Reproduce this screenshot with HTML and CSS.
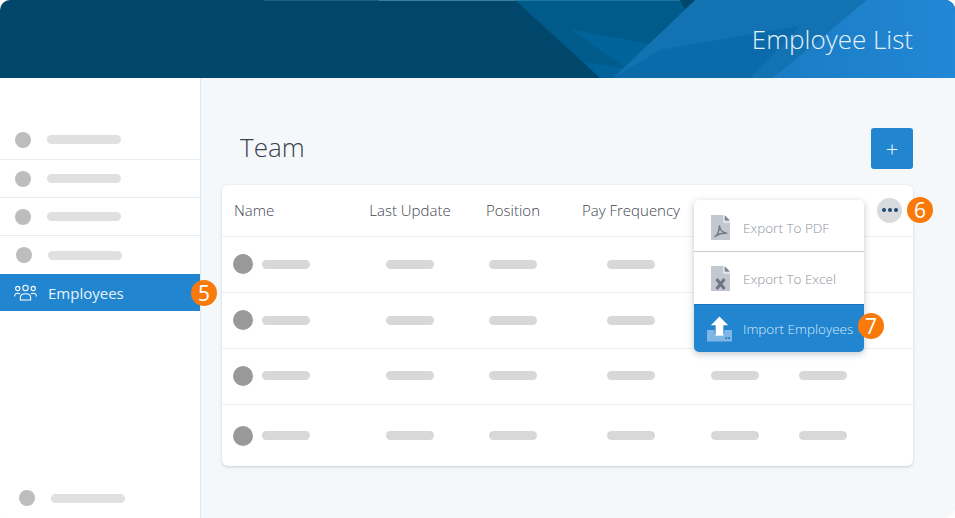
FILE: index.html
```html
<!DOCTYPE html>
<html lang="en">
<head>
<meta charset="utf-8">
<title>Employee List</title>
<link rel="stylesheet" href="styles.css">
</head>
<body>
<div class="app">
  <header class="banner">
    <svg class="banner-art" viewBox="0 0 955 78" preserveAspectRatio="none" aria-hidden="true">
      <defs>
        <linearGradient id="bright" x1="0" y1="0" x2="1" y2="0">
          <stop offset="0" stop-color="#1a7cc3"/>
          <stop offset="1" stop-color="#2287d6"/>
        </linearGradient>
      </defs>
      <polygon points="515,0 695,0 613,78 600,78" fill="#005a8a"/>
      <polygon points="570,29 650,44 625,68" fill="#00639a"/>
      <polygon points="600,78 584,62 625,68 613,78" fill="#00639a"/>
      <polygon points="695,0 955,0 955,78 613,78" fill="#1372b2"/>
      <polygon points="613,78 660,50 800,26 750,78" fill="#0b6aa9"/>
      <polygon points="773,78 867,0 955,0 955,78" fill="url(#bright)"/>
      <polygon points="680,0 695,0 685,9" fill="#00476b"/>
      <rect x="264" y="0" width="115" height="1" fill="#1f6283"/>
      <rect x="379" y="0" width="136" height="1" fill="#3f7d9e"/>
      <rect x="515" y="0" width="165" height="1" fill="#1b789f"/>
    </svg>
    <h1 class="banner-title">Employee List</h1>
  </header>
  <div class="body">
    <nav class="sidebar">
      <div class="nav-item"><span class="dot"></span><span class="nav-bar"></span></div>
      <div class="nav-item"><span class="dot"></span><span class="nav-bar"></span></div>
      <div class="nav-item"><span class="dot"></span><span class="nav-bar"></span></div>
      <div class="nav-item nav-item-shift"><span class="dot"></span><span class="nav-bar"></span></div>
      <div class="nav-active">
        <svg class="people" viewBox="0 0 24 18" aria-hidden="true">
          <g fill="none" stroke="#fff" stroke-width="1.1">
            <circle cx="12" cy="3.8" r="2.8"/>
            <circle cx="3.9" cy="4.3" r="2.2"/>
            <circle cx="20.1" cy="4.3" r="2.2"/>
            <path d="M6.6 16.4v-2.6c0-2.4 2-4.1 5.4-4.1s5.4 1.700 5.400 4.100v2.600z"/>
            <path d="M.6 12.600c0-2.300 1.300-3.400 3.400-3.400 1 0 1.800.3 2.400.8"/>
            <path d="M23.400 12.600c0-2.300-1.300-3.400-3.400-3.400-1 0-1.800.3-2.400.8"/>
          </g>
        </svg>
        <span class="nav-label">Employees</span>
        <span class="badge badge-5">5</span>
      </div>
      <div class="nav-item nav-foot"><span class="dot"></span><span class="nav-bar"></span></div>
    </nav>
    <main class="content">
      <div class="title-row">
        <h2 class="page-title">Team</h2>
        <button class="add-btn" type="button">+</button>
      </div>
      <section class="card">
        <div class="row row-head">
          <span class="cell cell-name">Name</span>
          <span class="cell">Last Update</span>
          <span class="cell">Position</span>
          <span class="cell">Pay Frequency</span>
          <span class="cell"></span>
          <span class="cell"></span>
          <span class="cell"><span class="more"><i></i><i></i><i></i></span></span>
        </div>
        <div class="row">
          <span class="cell cell-name"><span class="avatar"></span><span class="bar"></span></span>
          <span class="cell"><span class="bar"></span></span>
          <span class="cell"><span class="bar"></span></span>
          <span class="cell"><span class="bar"></span></span>
        </div>
        <div class="row">
          <span class="cell cell-name"><span class="avatar"></span><span class="bar"></span></span>
          <span class="cell"><span class="bar"></span></span>
          <span class="cell"><span class="bar"></span></span>
          <span class="cell"><span class="bar"></span></span>
        </div>
        <div class="row row-third">
          <span class="cell cell-name"><span class="avatar"></span><span class="bar"></span></span>
          <span class="cell"><span class="bar"></span></span>
          <span class="cell"><span class="bar"></span></span>
          <span class="cell"><span class="bar"></span></span>
          <span class="cell"><span class="bar"></span></span>
          <span class="cell"><span class="bar"></span></span>
        </div>
        <div class="row row-last">
          <span class="cell cell-name"><span class="avatar"></span><span class="bar"></span></span>
          <span class="cell"><span class="bar"></span></span>
          <span class="cell"><span class="bar"></span></span>
          <span class="cell"><span class="bar"></span></span>
          <span class="cell"><span class="bar"></span></span>
          <span class="cell"><span class="bar"></span></span>
        </div>
        <span class="badge badge-6">6</span>
        <div class="menu">
          <div class="menu-item menu-pdf">
            <svg class="file-icon" viewBox="0 0 19 25" aria-hidden="true">
              <path d="M0 0h12.500l6.500 6.500v18.500h-19z" fill="#c3c8d0"/>
              <path d="M13.500 0l5.500 5.500h-5.500z" fill="#7c8490"/>
              <path d="M13 0v7h6" fill="none" stroke="#fff" stroke-width="1"/>
              <path d="M4 21.500c2.500-1.500 4-5 4.500-10.500.4 3.500 2.500 6.500 7 7.300-3.500-.2-8 .4-11.500 3.200z" fill="none" stroke="#717986" stroke-width="1.500" stroke-linejoin="round"/>
            </svg>
            <span>Export To PDF</span>
          </div>
          <div class="menu-item menu-excel">
            <svg class="file-icon" viewBox="0 0 19 25" aria-hidden="true">
              <path d="M0 0h12.500l6.500 6.500v18.500h-19z" fill="#c3c8d0"/>
              <path d="M13.500 0l5.500 5.500h-5.500z" fill="#7c8490"/>
              <path d="M13 0v7h6" fill="none" stroke="#fff" stroke-width="1"/>
              <path d="M5.500 13l8 10M13.500 13l-8 10" fill="none" stroke="#6f7784" stroke-width="3"/>
            </svg>
            <span>Export To Excel</span>
          </div>
          <div class="menu-item menu-import">
            <svg class="import-icon" viewBox="0 0 26 26" aria-hidden="true">
              <path d="M0 14h8v4h10v-4h8v12h-26z" fill="#7fb6e6"/>
              <path d="M13 0l9 9h-5v11h-8v-11h-5z" fill="#fff"/>
              <rect x="19" y="21.500" width="2" height="2" fill="#2b7fc6"/>
              <rect x="22" y="21.500" width="2" height="2" fill="#2b7fc6"/>
            </svg>
            <span>Import Employees</span>
            <span class="badge badge-7">7</span>
          </div>
        </div>
      </section>
    </main>
  </div>
</div>
</body>
</html>
```

FILE: styles.css
```css
* {
  box-sizing: border-box;
}

html,
body {
  margin: 0;
  height: 100%;
  background: #fff;
}

body {
  font-family: "Open Sans", "Liberation Sans", sans-serif;
  color: #3f4650;
}

.app {
  width: 955px;
  height: 518px;
  display: flex;
  flex-direction: column;
  overflow: hidden;
  border-radius: 10px;
  background: #f4f8fb;
}

.banner {
  position: relative;
  flex: 0 0 78px;
  display: flex;
  justify-content: flex-end;
  align-items: center;
  padding-right: 42px;
  background: #00476b;
}

.banner-art {
  position: absolute;
  left: 0;
  top: 0;
  width: 955px;
  height: 78px;
}

.banner-title {
  position: relative;
  margin: 0;
  font-size: 26px;
  font-weight: 300;
  color: #e3f1fb;
  line-height: 34px;
}

.body {
  flex: 1;
  display: flex;
  min-height: 0;
}

.sidebar {
  flex: 0 0 201px;
  display: flex;
  flex-direction: column;
  padding-top: 42px;
  background: #fff;
  border-right: 1px solid #e4e8ec;
}

.nav-item {
  display: flex;
  align-items: center;
  gap: 16px;
  height: 38px;
  padding-left: 15px;
  border-bottom: 1px solid #e9ebee;
}

.nav-item:first-child {
  height: 40px;
}

.nav-item-shift {
  height: 38px;
  padding-left: 16px;
  border-bottom: 0;
}

.nav-foot {
  height: 38px;
  margin-top: auto;
  margin-bottom: 1px;
  padding-left: 19px;
  border-bottom: 0;
}

.dot {
  width: 16px;
  height: 16px;
  border-radius: 50%;
  background: #bdbdbd;
}

.nav-bar {
  width: 74px;
  height: 9px;
  border-radius: 5px;
  background: #e0e0e0;
}

.nav-active {
  position: relative;
  display: flex;
  align-items: center;
  gap: 11px;
  height: 37px;
  padding-left: 14px;
  background: #2185d0;
}

.people {
  width: 23px;
  height: 18px;
}

.nav-label {
  font-size: 15px;
  font-weight: 400;
  color: #e8f3fb;
}

.badge {
  position: absolute;
  display: flex;
  align-items: center;
  justify-content: center;
  width: 26px;
  height: 26px;
  border-radius: 50%;
  background: #f97a0a;
  color: #fff;
  font-size: 21px;
  font-weight: 500;
  line-height: 1;
}

.badge-5 {
  right: -17px;
  top: 6px;
}

.content {
  flex: 1;
  display: flex;
  flex-direction: column;
  padding: 50px 42px 52px 21px;
}

.title-row {
  display: flex;
  justify-content: space-between;
  align-items: center;
  height: 41px;
  padding-left: 18px;
  margin-bottom: 16px;
}

.page-title {
  margin: 0 0 4px;
  font-size: 26px;
  font-weight: 300;
  color: #3a424c;
  line-height: 36px;
}

.add-btn {
  width: 42px;
  height: 41px;
  padding: 0 0 2px;
  border: 0;
  border-radius: 3px;
  background: #2185d0;
  color: #f1f8fd;
  font-family: inherit;
  font-size: 22px;
  font-weight: 300;
  line-height: 1;
}

.card {
  position: relative;
  width: 691px;
  height: 281px;
  border-radius: 6px;
  background: #fff;
  box-shadow: 0 1px 3px rgba(40, 60, 80, 0.22);
}

.row {
  display: grid;
  grid-template-columns: 138px 100px 106px 130px 78px 98px 41px;
  align-items: center;
  height: 56px;
  padding-bottom: 1px;
  border-bottom: 1px solid #f0f1f3;
}

.row-head {
  height: 52px;
  font-size: 15px;
  font-weight: 300;
  color: #3f4650;
}

.row-third {
  padding-bottom: 2px;
}

.row-last {
  height: 60px;
  padding: 1px 0 0;
  border-bottom: 0;
}

.cell {
  display: flex;
  align-items: center;
  justify-content: center;
  white-space: nowrap;
}

.cell-name {
  justify-content: flex-start;
  gap: 9px;
  padding-left: 11px;
}

.row-head .cell-name {
  padding-left: 12px;
}

.avatar {
  width: 20px;
  height: 20px;
  border-radius: 50%;
  background: #999;
}

.bar {
  width: 48px;
  height: 9px;
  border-radius: 5px;
  background: #d8d8d8;
}

.more {
  display: flex;
  align-items: center;
  justify-content: center;
  gap: 2px;
  width: 25px;
  height: 25px;
  margin-right: 6px;
  border-radius: 50%;
  background: #d8dadc;
}

.more i {
  width: 4px;
  height: 4px;
  border-radius: 50%;
  background: #1d4a72;
}

.badge-6 {
  left: 685px;
  top: 12px;
}

.menu {
  position: absolute;
  left: 472px;
  top: 15px;
  width: 170px;
  height: 152px;
  border-radius: 5px;
  background: #fff;
  box-shadow: 0 2px 7px rgba(30, 50, 70, 0.28);
  font-size: 13.5px;
  font-weight: 300;
  color: #8d949e;
}

.menu-item {
  position: relative;
  display: flex;
  align-items: center;
  padding-left: 17px;
}

.menu-pdf {
  height: 52px;
  padding-top: 4px;
  border-bottom: 1px solid #c9cdd2;
  gap: 13px;
}

.menu-excel {
  height: 52px;
  padding-top: 1px;
  gap: 13px;
}

.menu-import {
  height: 48px;
  gap: 11px;
  padding-left: 13px;
  border-top: 1px solid #1c74b8;
  border-radius: 0 0 5px 5px;
  background: #2185d0;
  color: #d7eafa;
}

.file-icon {
  width: 19px;
  height: 25px;
}

.import-icon {
  width: 25px;
  height: 26px;
}

.badge-7 {
  left: 164px;
  top: 8px;
}
```
